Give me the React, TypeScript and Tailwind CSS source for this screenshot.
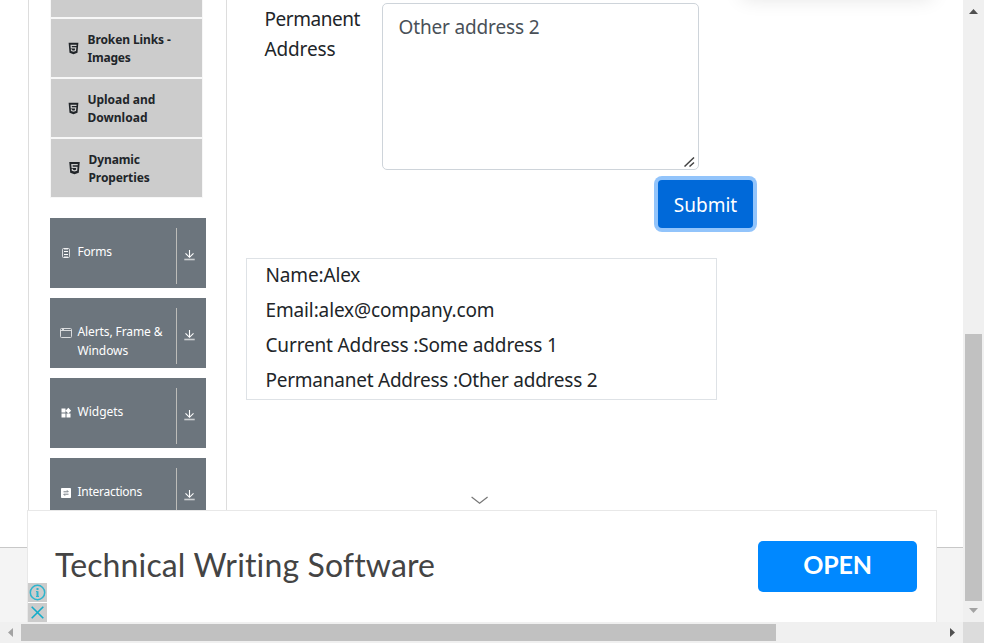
import type { ReactNode } from "react";
import { FaHtml5 } from "react-icons/fa";
import { MdWidgets } from "react-icons/md";

const segoe = "font-['Noto_Sans','Open_Sans',sans-serif]";

function ListItem({ first, second, shift, t1, t2 }: { first: string; second: string; shift?: boolean; t1: string; t2: string }) {
  return (
    <li className={`flex h-[58px] items-center bg-[#ccc] text-[#212529] ${shift ? "pl-[17px]" : "pl-4"}`}>
      <FaHtml5 className={`shrink-0 ${shift ? "h-[14px] w-[13px]" : "size-[13px]"}`} />
      <span className="ml-[7.5px] pt-[2px] text-[12px] leading-[18px] font-bold whitespace-nowrap">
        <span className={`block ${t1}`}>{first}</span>
        <span className={`block ${t2}`}>{second}</span>
      </span>
    </li>
  );
}

function Panel({ icon, children }: { icon: ReactNode; children: ReactNode }) {
  return (
    <div className="flex h-[70px] shrink-0 bg-[#6c757d] text-white">
      <div className="flex w-[126px] pt-6 pl-[10px]">
        <span className="flex h-[22px] w-3 items-center justify-center">{icon}</span>
        <span className="ml-[5.5px] text-[12px] leading-[19px] whitespace-nowrap">{children}</span>
      </div>
      <div className="mt-[10px] h-14 w-px bg-[#bcbcb9]" />
      <svg className="mt-8 ml-[7px] h-[11px] w-[11px]" viewBox="0 0 11 11" fill="none" stroke="white">
        <path d="M5.5 0v7M1.5 3.4l4 3.9 4-3.9" strokeWidth="1.1" />
        <path d="M.3 9.5h10.4" strokeWidth="1.6" opacity=".65" />
      </svg>
    </div>
  );
}

function FormIcon() {
  return (
    <svg width="10" height="10" viewBox="0 0 10 10" fill="none" stroke="white" strokeWidth="1">
      <rect x="1.5" y=".5" width="7" height="9" rx="1" opacity=".75" />
      <path d="M3 3.5h4M3 6.5h4" />
      <path d="M3 .9h4M3 9.1h4" />
    </svg>
  );
}

function WindowIcon() {
  return (
    <svg width="12" height="10" viewBox="0 0 12 10" fill="none" stroke="white" opacity=".75">
      <rect x=".5" y=".5" width="11" height="9" rx="1" />
      <path d="M1 2.5h10" />
      <path d="M2 1.5h2" strokeWidth="1" />
    </svg>
  );
}

function SwapIcon() {
  return (
    <svg width="10" height="10" viewBox="0 0 10 10">
      <rect width="10" height="10" rx=".8" fill="white" />
      <path d="M2.5 3.8h4.7M6 2.3l1.3 1.5M7.5 6.2H2.8M4 7.7 2.7 6.2" stroke="#6c757d" fill="none" strokeWidth=".9" />
    </svg>
  );
}

function Sidebar() {
  return (
    <aside className="ml-7 flex h-[547px] w-[199px] shrink-0 flex-col overflow-hidden border-x border-[#ddd] pl-[21px]">
      <ul className="flex w-[153px] flex-col gap-[2px] border-x border-b border-[#f7f7f7] bg-[#f7f7f7]">
        <li className="h-[17px] bg-[#ccc]" />
        <ListItem first="Broken Links -" second="Images" t1="tracking-[-0.1px]" t2="tracking-[-0.2px]" />
        <ListItem first="Upload and" second="Download" t1="tracking-[-0.05px]" t2="tracking-[0px]" />
        <ListItem first="Dynamic" second="Properties" t1="tracking-[-0.1px]" t2="tracking-[-0.1px]" shift />
      </ul>
      <div className="mt-5 flex w-[156px] flex-col gap-[10px]">
        <Panel icon={<FormIcon />}><span className="tracking-[-0.2px]">Forms</span></Panel>
        <Panel icon={<WindowIcon />}><span className="tracking-[-0.1px]">Alerts, Frame &amp;<br />Windows</span></Panel>
        <Panel icon={<MdWidgets className="size-3" />}>Widgets</Panel>
        <Panel icon={<SwapIcon />}><span className="tracking-[-0.27px]">Interactions</span></Panel>
      </div>
    </aside>
  );
}

function FormArea() {
  return (
    <main className="ml-[19px] w-[530px] text-[19px] text-[#212529]">
      <div className="flex">
        <div className="w-[136px] pt-[4px] pl-[18.5px] leading-[30px]">
          <div className="tracking-[-0.45px]">Permanent</div>
          <div className="tracking-[-0.15px]">Address</div>
        </div>
        <div className="mt-[3px] flex h-[167px] w-[317px] items-end justify-end rounded-[5px] border border-[#ced4da]">
          <p className="mr-auto self-start pt-[8px] pl-[15.5px] leading-[30px] tracking-[-0.15px] text-[#495057]">Other address 2</p>
          <svg className="mr-[3px] mb-[2px]" width="11" height="10" viewBox="0 0 11 10" stroke="#444" strokeWidth="1.5">
            <path d="M.5 9.5 10 .5M5.5 9.5 10 5.5" />
          </svg>
        </div>
      </div>
      <div className="mt-[10px] flex justify-end pr-[23px]">
        <button className="h-12 w-[95px] rounded-[4px] bg-[#0069d9] pt-[2px] text-white shadow-[0_0_0_4px_#92c4fb]">Submit</button>
      </div>
      <div className="mt-[30px] h-[142px] w-[471px] border border-[#dee2e6] pl-[18.5px] leading-[35px]">
        <p className="-mt-px tracking-[-0.15px]">Name:Alex</p>
        <p className="tracking-[-0.13px]">Email:alex@company.com</p>
        <p className="tracking-[-0.15px]">Current Address :Some address 1</p>
        <p className="tracking-[-0.24px]">Permananet Address :Other address 2</p>
      </div>
    </main>
  );
}

function AdBanner() {
  return (
    <div className="absolute top-[510px] left-[27px] flex h-[112px] w-[910px] border border-b-0 border-[#e8e8e8] bg-white">
      <div className="mt-[72px] flex w-[19px] flex-col gap-px">
        <div className="flex h-[19px] shrink-0 items-center justify-center bg-[#ccc]">
          <svg width="17" height="17" viewBox="0 0 17 17" fill="none" stroke="#2eb4cd">
            <circle cx="8.5" cy="8.5" r="7.2" strokeWidth="1.5" />
            <path d="M8.5 4v2M8.5 7.2v5.3" strokeWidth="2" />
            <path d="M7 7.5h1.5M7 12.5h3" />
          </svg>
        </div>
        <div className="flex h-[19px] shrink-0 items-center justify-center bg-[#ccc]">
          <svg width="13" height="13" viewBox="0 0 13 13" stroke="#12acc9" strokeWidth="1.6"><path d="m.7.7 11.6 11.6M12.3.7.7 12.3" /></svg>
        </div>
      </div>
      <div className="ml-2 w-[703px] pt-[32px] text-[32px] leading-[44px] tracking-[0.14px] whitespace-nowrap text-[#444] font-['Lato',sans-serif]">Technical Writing Software</div>
      <button className="mt-[30px] h-[51px] w-[159px] rounded-[5px] bg-[#08f] pb-[3px] text-[25px] font-bold tracking-[-0.2px] text-white font-['Lato',sans-serif]">OPEN</button>
    </div>
  );
}

export default function App() {
  return (
    <div className={`grid h-[643px] w-[984px] grid-cols-[963px_21px] grid-rows-[622px_21px] overflow-hidden bg-white ${segoe}`}>
      <div className="relative overflow-hidden bg-[#f4f4f4]">
        <div className="flex h-[548px] border-b border-[#c8c8c8] bg-white">
          <Sidebar />
          <FormArea />
        </div>
        <div className="absolute -top-[22px] left-[742px] h-[18px] w-[190px] shadow-[0_2px_20px_rgba(0,0,0,0.12)]" />
        <svg className="absolute top-[496px] left-[471px]" width="18" height="9" viewBox="0 0 18 9" fill="none" stroke="#777" strokeWidth="1.2"><path d="m.6 1 8 6.3 8-6.3" /></svg>
        <AdBanner />
      </div>
      <div className="flex flex-col items-center bg-[#f0f0f0]">
        <svg className="mt-[9px]" width="9" height="5" viewBox="0 0 9 5" fill="#505050"><path d="M0 5 4.5 0 9 5z" /></svg>
        <div className="mt-[320px] h-[267px] w-[17px] bg-[#c1c1c1]" />
        <svg className="mt-[7px]" width="9" height="5" viewBox="0 0 9 5" fill="#a3a3a3"><path d="M0 0h9L4.5 5z" /></svg>
      </div>
      <div className="flex items-center bg-[#f0f0f0]">
        <svg className="ml-2" width="5" height="9" viewBox="0 0 5 9" fill="#a3a3a3"><path d="M5 0v9L0 4.5z" /></svg>
        <div className="ml-2 h-[17px] w-[755px] bg-[#c1c1c1]" />
        <svg className="ml-[174px]" width="5" height="9" viewBox="0 0 5 9" fill="#505050"><path d="M0 0v9l5-4.5z" /></svg>
      </div>
      <div className="bg-[#dcdcdc]" />
    </div>
  );
}
